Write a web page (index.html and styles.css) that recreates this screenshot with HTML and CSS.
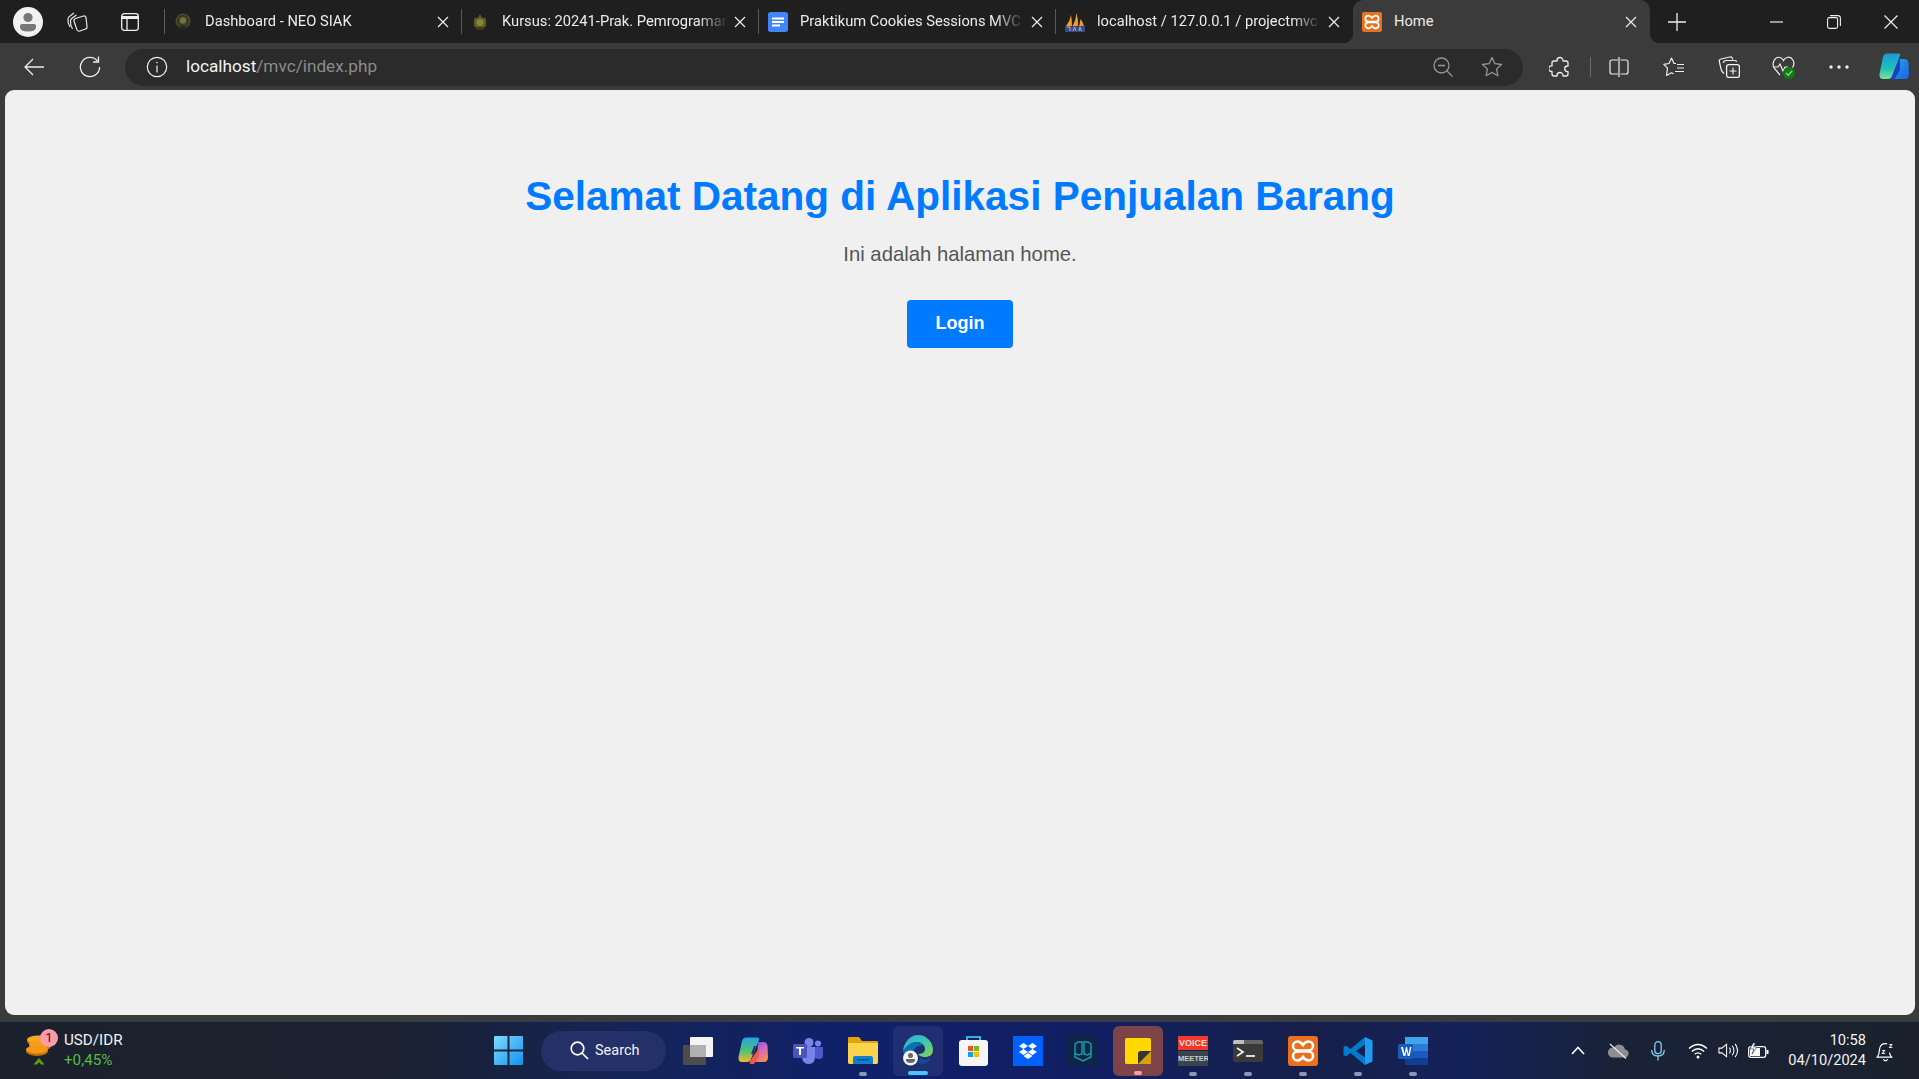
FILE: index.html
```html
<!DOCTYPE html>
<html lang="id">
<head>
<meta charset="utf-8">
<title>Home</title>
<link rel="stylesheet" href="styles.css">
</head>
<body>
<div class="screen">
  <header class="tabstrip">
    <div class="strip-btn b1"><svg width="30" height="30" viewBox="0 0 30 30"><circle cx="15" cy="15" r="15" fill="#f2f2f2"/><circle cx="15" cy="10.5" r="4.6" fill="#777"/><path d="M7 18.5q0-1.500 2-1.500h12q2 0 2 1.500v1.500q0 4.500-8 4.500t-8-4.500z" fill="#777"/></svg></div>
    <div class="strip-btn b2"><svg width="22" height="22" viewBox="0 0 22 22" fill="none" stroke="#e8e8e8" stroke-width="1.200"><path d="M4 16Q1.500 12 2 8q.3-2 2-3l4-3M6.500 18Q4 14 4.500 9.500q.3-1.500 2-2.800l4-2.700"/><path d="M9.500 7.500l8-2.500q2-.3 2.500 1.500l1 9q.2 2-1.500 2.500l-5.500 2q-2 .5-3-1L8 10q-.5-1.800 1.500-2.500z"/></svg></div>
    <div class="strip-btn b3"><svg width="18" height="18" viewBox="0 0 18 18" fill="none" stroke="#f0f0f0" stroke-width="1.300"><rect x=".7" y=".7" width="16.600" height="16.600" rx="2.500"/><path d="M.7 4.500h16.600" stroke-width="3"/><path d="M6 5v12"/></svg></div>
    <div class="strip-sep"></div>

    <div class="tab">
      <svg class="fav" viewBox="0 0 18 18"><circle cx="9" cy="8" r="7" fill="#3a3a26" stroke="#55553a"/><circle cx="9" cy="7.500" r="3.200" fill="#77713a"/><path d="M5 13h8l-4 3z" fill="#222"/></svg>
      <span class="tab-title">Dashboard - NEO SIAK</span>
      <svg class="tab-x" viewBox="0 0 12 12"><path d="M1 1l10 10M11 1L1 11"/></svg>
      <span class="tab-sep"></span>
    </div>
    <div class="tab">
      <svg class="fav" viewBox="0 0 18 18"><path d="M9 1l2 3.500 4 1v7l-2.500 3.500h-7L3 12.500v-7l4-1z" fill="#5f5a28"/><circle cx="9" cy="9.500" r="3.600" fill="#8c8438"/><path d="M4 14h10l-2 3H6z" fill="#3c3a1e"/></svg>
      <span class="tab-title">Kursus: 20241-Prak. Pemrogramar</span>
      <svg class="tab-x" viewBox="0 0 12 12"><path d="M1 1l10 10M11 1L1 11"/></svg>
      <span class="tab-sep"></span>
    </div>
    <div class="tab">
      <svg class="fav docs" viewBox="0 0 20 20"><rect width="20" height="20" rx="2.500" fill="#4285f4"/><path d="M4 5.500h12v2H4zM4 9h12v2H4zM4 12.500h8v2H4z" fill="#fff"/></svg>
      <span class="tab-title">Praktikum Cookies Sessions MVC</span>
      <svg class="tab-x" viewBox="0 0 12 12"><path d="M1 1l10 10M11 1L1 11"/></svg>
      <span class="tab-sep"></span>
    </div>
    <div class="tab">
      <svg class="fav docs" viewBox="0 0 20 20"><path d="M1 14Q5 9 6 3q1 5 1 11zM7.500 14Q11 8 11.500 1q2 7 1.500 13zM14 14q1-3 1.500-7 2.500 3 3.500 7z" fill="#f29b26"/><rect y="14" width="20" height="6" fill="#3d4a80"/><path d="M2 15h3v4M8 19l1.500-4 1.500 4M14 19l1-4 1.500 4" fill="none" stroke="#a5aed6" stroke-width="1"/></svg>
      <span class="tab-title">localhost / 127.0.0.1 / projectmvc</span>
      <svg class="tab-x" viewBox="0 0 12 12"><path d="M1 1l10 10M11 1L1 11"/></svg>
    </div>
    <div class="tab tab-active">
      <svg class="fav docs" viewBox="0 0 30 30"><rect width="30" height="30" rx="3" fill="#e8701f"/><path d="M15 9C13 6 11 5.500 9.500 5.500a4.500 4.500 0 0 0 0 9h11a4.500 4.500 0 0 0 0-9C19 5.500 17 6 15 9zM15 21C13 24 11 24.500 9.500 24.500a4.500 4.500 0 0 1 0-9h11a4.500 4.500 0 0 1 0 9C19 24.500 17 24 15 21z" fill="none" stroke="#fff" stroke-width="2.600"/></svg>
      <span class="tab-title">Home</span>
      <svg class="tab-x" viewBox="0 0 12 12"><path d="M1 1l10 10M11 1L1 11"/></svg>
    </div>
    <div class="newtab"><svg width="18" height="18" viewBox="0 0 18 18"><path d="M9 0v18M0 9h18" stroke="#eee" stroke-width="1.300"/></svg></div>
    <div class="winctl">
      <div class="wbtn"><svg width="14" height="14" viewBox="0 0 14 14"><path d="M0 7h13" stroke="#eee" stroke-width="1.200"/></svg></div>
      <div class="wbtn"><svg width="14" height="14" viewBox="0 0 14 14" fill="none" stroke="#eee" stroke-width="1.100"><rect x=".6" y="2.600" width="10" height="10.800" rx="1.800"/><path d="M3 .6h8q2.400 0 2.400 2.400v8"/></svg></div>
      <div class="wbtn"><svg width="14" height="14" viewBox="0 0 14 14"><path d="M.5.5l13 13M13.500.5l-13 13" stroke="#eee" stroke-width="1.200"/></svg></div>
    </div>
  </header>

  <nav class="toolbar">
    <div class="tool"><svg width="21" height="18" viewBox="0 0 21 18" fill="none" stroke="#eee" stroke-width="1.300"><path d="M20 9H1M9 1L1 9l8 8"/></svg></div>
    <div class="tool"><svg width="22" height="22" viewBox="0 0 22 22" fill="none" stroke="#eee" stroke-width="1.300"><path d="M18.500 5A9.600 9.600 0 1 0 20.600 11"/><path d="M19.500 .5v5.500H14"/></svg></div>
    <div class="address">
      <svg width="22" height="22" viewBox="0 0 22 22" fill="none" stroke="#eee" stroke-width="1.200"><circle cx="11" cy="11" r="9.700"/><path d="M11 9.500v7"/><circle cx="11" cy="6.500" r=".8" fill="#eee" stroke="none"/></svg>
      <div class="url"><span class="host">localhost</span><span class="path">/mvc/index.php</span></div>
      <div class="addr-icons">
        <svg width="20" height="20" viewBox="0 0 20 20" fill="none" stroke="#969696" stroke-width="1.300"><circle cx="8.500" cy="8.500" r="7.500"/><path d="M14 14l5.500 5.500M5 8.500h7"/></svg>
        <svg width="22" height="22" viewBox="0 0 22 22" fill="none" stroke="#969696" stroke-width="1.300"><path d="M11 1.500l2.900 6.200 6.600.8-4.900 4.600 1.300 6.700L11 16.500l-5.900 3.300 1.300-6.700L1.500 8.500l6.600-.8z" stroke-linejoin="round"/></svg>
      </div>
    </div>
    <div class="tool-right">
      <div class="tool"><svg width="21" height="22" viewBox="0 0 21 22" fill="none" stroke="#eee" stroke-width="1.300" stroke-linejoin="round"><path d="M8 4.500a3 3 0 0 1 6 0V5h3q2 0 2 2v3h-.5a2.800 2.800 0 0 0 0 5.600h.5V18q0 2-2 2h-3v-.5a3 3 0 0 0-6 0v.5H5q-2 0-2-2v-2.500H2.500a2.800 2.800 0 0 1 0-5.600H3V7q0-2 2-2h3z"/></svg></div>
      <div class="tool-div"></div>
      <div class="tool tool-split"><svg width="20" height="20" viewBox="0 0 20 20" fill="none" stroke="#eee" stroke-width="1.200"><path d="M9 3H3q-2 0-2 2v10q0 2 2 2h6M11.500 3H17q2 0 2 2v10q0 2-2 2h-5.500M10 0v20"/></svg></div>
      <div class="tool"><svg width="22" height="20" viewBox="0 0 22 20" fill="none" stroke="#eee" stroke-width="1.200" stroke-linejoin="round"><path d="M13 6.500H11L8.500 1 6 6.500l-5.200.8L4.500 11.200l-1 7.300 5-2.800 2 1.100"/><path d="M14 7.500h7M14 11h7M12 14.500h9"/></svg></div>
      <div class="tool"><svg width="22" height="22" viewBox="0 0 22 22" fill="none" stroke="#eee" stroke-width="1.200"><path d="M15 3.500l-1-1.800q-.6-1-2-.7L3 3q-2 .5-1.700 2.300L3 13q.5 2.500 3 4.500"/><path d="M5.500 7q0-2.500 2.500-2.500h9q1.500 0 1.500 1.500"/><rect x="8.600" y="8.600" width="12.800" height="12.800" rx="2.200" stroke="#f2f2f2" stroke-width="1.300"/><path d="M15 11.500v7M11.500 15h7"/></svg></div>
      <div class="tool tool-health"><svg width="24" height="24" viewBox="0 0 24 24"><path d="M8 20L2.500 13.500C-1 8.500 3 1 8 2.500q2.500.8 3.500 3 1-2.200 3.500-3c5-1.500 9 5 5.500 10" fill="none" stroke="#eee" stroke-width="1.200"/><path d="M2 12h4l2-3 3 7 2-4h3" fill="none" stroke="#eee" stroke-width="1.200"/><circle cx="17" cy="18" r="6" fill="#107c10"/><path d="M14 18l2.200 2.300 3.900-4.300" fill="none" stroke="#8fce8f" stroke-width="1.400"/></svg></div>
      <div class="tool"><svg width="20" height="4" viewBox="0 0 20 4" fill="#eee"><circle cx="2" cy="2" r="1.700"/><circle cx="10" cy="2" r="1.700"/><circle cx="18" cy="2" r="1.700"/></svg></div>
      <div class="tool tool-copilot"><svg width="30" height="27" viewBox="0 0 30 27"><defs><linearGradient id="cpA" x1="0" y1="0" x2="0" y2="1"><stop offset="0" stop-color="#1a9ad6"/><stop offset=".6" stop-color="#20c2b8"/><stop offset="1" stop-color="#7fe0a0"/></linearGradient><linearGradient id="cpB" x1="0" y1="0" x2="1" y2="1"><stop offset="0" stop-color="#27a9f0"/><stop offset="1" stop-color="#1a62e0"/></linearGradient></defs><path d="M20 6h5q4 0 4.500 4l.5 11q0 5-4 5H12l4-4z" fill="url(#cpB)"/><path d="M8 .5h11q3 0 2 2.500l-8 20q-1 3-4 3H4q-4 0-3.500-5L4 4q1-3.500 4-3.500z" fill="url(#cpA)"/><path d="M21 3v14l-4 7q-1.500 2.500-4 2.500h-3q2 0 3-2.500z" fill="#1542c8"/></svg></div>
    </div>
  </nav>

  <main class="viewport">
    <h1 class="title">Selamat Datang di Aplikasi Penjualan Barang</h1>
    <p class="lead">Ini adalah halaman home.</p>
    <a class="login" href="#">Login</a>
  </main>

  <footer class="taskbar">
    <div class="widget">
      <div class="coin">
        <svg width="32" height="40" viewBox="0 0 32 40"><ellipse cx="18" cy="10" rx="11" ry="5" fill="#d97c08"/><ellipse cx="18" cy="8.500" rx="11" ry="4" fill="#f6a72a"/><ellipse cx="20" cy="15" rx="11" ry="5" fill="#d87a08"/><ellipse cx="20" cy="13.500" rx="11" ry="4" fill="#f59d1a"/><ellipse cx="17" cy="20" rx="11" ry="5" fill="#c96e06"/><ellipse cx="17" cy="18.500" rx="11" ry="4" fill="#f39a15"/><path d="M13.500 33.500L19 27l5.500 6.500h-3.500L19 31.300l-2 2.200z" fill="#5e9e12"/></svg>
        <span class="badge">1</span>
      </div>
      <div class="quote"><span class="pair">USD/IDR</span><span class="chg">+0,45%</span></div>
    </div>
    <div class="winbtn"><svg width="29" height="29" viewBox="0 0 29 29"><defs><linearGradient id="win" x1="0" y1="0" x2="1" y2="1"><stop offset="0" stop-color="#7fdcfc"/><stop offset="1" stop-color="#0f92f2"/></linearGradient></defs><path d="M1 0h12.500v13.500H0V1q0-1 1-1zM15.500 0H28q1 0 1 1v12.500H15.500zM0 15.500h13.500V29H1q-1 0-1-1zM15.500 15.500H29V28q0 1-1 1H15.500z" fill="url(#win)"/></svg></div>
    <div class="search"><svg width="19" height="19" viewBox="0 0 19 19" fill="none" stroke="#fff" stroke-width="1.700"><circle cx="7.500" cy="7.500" r="6.300"/><path d="M12 12l6 6"/></svg><span>Search</span></div>
    <div class="apps">
      <div class="app"><svg width="30" height="28" viewBox="0 0 30 28"><rect y="8" width="23" height="20" rx="1" fill="#4c4c4c"/><rect x="7" width="23" height="20" rx="1" fill="#f4f4f4"/><rect x="7" y="8" width="16" height="12" fill="#b0b0b0"/></svg></div>
      <div class="app"><svg width="30" height="28" viewBox="0 0 30 28"><defs><linearGradient id="cA" x1=".3" y1="0" x2=".3" y2="1"><stop offset="0" stop-color="#2aa0e8"/><stop offset=".5" stop-color="#46c27a"/><stop offset="1" stop-color="#f5b830"/></linearGradient><linearGradient id="cB" x1="0" y1="0" x2=".6" y2="1"><stop offset="0" stop-color="#5a5ce0"/><stop offset=".55" stop-color="#d869c6"/><stop offset="1" stop-color="#f58a55"/></linearGradient></defs><path d="M20 5h5q4 0 4.500 4l.5 11q0 5-4 5H16l3-3z" fill="url(#cB)"/><path d="M8 .5h11q3 0 2 2.500l-8 19q-1 3-4 3H4q-4 0-3.500-5L4 4q1-3.500 4-3.500z" fill="url(#cA)"/><path d="M21 11v8l-5 8h-3q-2 0-1-3 1-1 2-3z" fill="#ee5a44"/><path d="M17 9l-3 8" stroke="#232a78" stroke-width="2"/></svg></div>
      <div class="app"><svg width="30" height="26" viewBox="0 0 30 26"><circle cx="25" cy="5.500" r="3" fill="#7b83eb"/><circle cx="16" cy="4.500" r="4.500" fill="#7b83eb"/><path d="M21 9h8q1 0 1 1v7q0 4-4 4-3 0-5-2z" fill="#5059c9"/><path d="M9 9h13v10q0 7-6 7t-7-6z" fill="#7b83eb"/><rect y="6" width="14" height="14" rx="1.500" fill="#4b53bc"/><path d="M3 9h8v1.500H8V17H6v-6.500H3z" fill="#fff"/></svg></div>
      <div class="app app-dot"><svg width="30" height="27" viewBox="0 0 30 27"><path d="M0 1q0-1 1-1h10l3 4h15q1 0 1 1v20q0 2-2 2H2q-2 0-2-2z" fill="#e3a30c"/><path d="M0 6h30v19q0 2-2 2H2q-2 0-2-2z" fill="#fcd34d"/><path d="M5 27v-6q0-2 2-2h16q2 0 2 2v6z" fill="#0f80d0"/><path d="M9 22h12v1.500H9z" fill="#0a4d8a"/></svg></div>
      <div class="app app-edge"><svg width="30" height="32" viewBox="0 0 30 32"><defs><linearGradient id="eA" x1="0" y1="0" x2="1" y2="1"><stop offset="0" stop-color="#2fa8e0"/><stop offset=".5" stop-color="#3cc8b0"/><stop offset="1" stop-color="#8ad44c"/></linearGradient></defs><path d="M15 0a15 15 0 0 1 15 15c0 5-4 7-8 7-3 0-6-1-7-3 3 0 7-1 7-5 0-4-4-7-8-7-6 0-11 5-14 9C1 7 7 0 15 0z" fill="url(#eA)"/><path d="M0 16c3-5 8-9 14-9 3 0 5 2 6 4-6-2-10 3-10 9 0 3 2 6 5 8C7 28 1 24 0 16z" fill="#0b6fb8"/><path d="M15 28c5 2 11 0 13-5-3 2-8 2-11 0-1 2-1 4-2 5z" fill="#0c4f94"/><circle cx="7.500" cy="23" r="7.500" fill="#f3f3f3"/><circle cx="7.500" cy="20.500" r="2.500" fill="#666"/><path d="M3 24h9v1.500q-1 2.500-4.500 2.500T3 25.500z" fill="#666"/></svg></div>
      <div class="app"><svg width="29" height="31" viewBox="0 0 29 31"><path d="M8 7V2h13v5" fill="none" stroke="#2bb4d8" stroke-width="2"/><rect y="5" width="29" height="26" rx="3" fill="#f6f6f6"/><rect x="9" y="11" width="5" height="5" fill="#f25022"/><rect x="15" y="11" width="5" height="5" fill="#7fba00"/><rect x="9" y="17" width="5" height="5" fill="#00a4ef"/><rect x="15" y="17" width="5" height="5" fill="#ffb900"/></svg></div>
      <div class="app"><svg width="30" height="30" viewBox="0 0 30 30"><rect width="30" height="30" fill="#0061fe"/><path d="M10.500 7l4.500 3-4.500 3L6 10zM19.500 7l4.500 3-4.500 3L15 10zM10.500 13l4.500 3-4.500 3L6 16zM19.500 13l4.500 3-4.500 3L15 16zM10.500 20l4.500-3 4.500 3-4.500 3z" fill="#fff"/></svg></div>
      <div class="app"><svg width="30" height="30" viewBox="0 0 30 30"><rect width="30" height="30" fill="#0d2547"/><path d="M7 17V8l3-2h4v12l-3.500 1zM23 17V8l-3-2h-4v12l3.500 1zM7 17v4l8 4 8-4v-4" fill="none" stroke="#16a3ac" stroke-width="1.400"/></svg></div>
      <div class="app app-sticky"><svg width="26" height="26" viewBox="0 0 26 26"><rect width="26" height="26" rx="1.500" fill="#ffd800"/><path d="M13 26V16q0-3 3-3h10v11q0 2-2 2z" fill="#d6a00c"/><path d="M13 26V16q0-3 3-3h10z" fill="#333"/></svg></div>
      <div class="app app-dot"><div class="vm"><span class="vm-top">VOICE</span><span class="vm-bot">MEETER</span></div></div>
      <div class="app app-dot"><svg width="30" height="22" viewBox="0 0 30 22"><rect width="30" height="22" rx="2" fill="#3a3a3a"/><path d="M0 2q0-2 2-2h9v4H0z" fill="#bfbfbf"/><path d="M11 0h17q2 0 2 2v2H11z" fill="#666"/><path d="M4 8l6 4-6 4" fill="none" stroke="#eee" stroke-width="1.800"/><path d="M13 16h9" stroke="#eee" stroke-width="1.800"/></svg></div>
      <div class="app app-dot"><svg width="30" height="30" viewBox="0 0 30 30"><rect width="30" height="30" rx="3" fill="#e8701f"/><path d="M15 9C13 6 11 5.500 9.500 5.500a4.500 4.500 0 0 0 0 9h11a4.500 4.500 0 0 0 0-9C19 5.500 17 6 15 9zM15 21C13 24 11 24.500 9.500 24.500a4.500 4.500 0 0 1 0-9h11a4.500 4.500 0 0 1 0 9C19 24.500 17 24 15 21z" fill="none" stroke="#fff" stroke-width="2.600"/></svg></div>
      <div class="app app-dot"><svg width="30" height="30" viewBox="0 0 30 30"><path d="M22 1L7.500 13 3 9.500.5 11v8L3 20.500 7.500 17 22 29v-7.500L13 15l9-6.500z" fill="#007acc"/><path d="M22 1l7.500 3.500v21L22 29z" fill="#1f9cf0"/></svg></div>
      <div class="app app-dot"><svg width="30" height="30" viewBox="0 0 30 30"><rect x="7" y="1" width="23" height="28" rx="2" fill="#2b7cd3"/><rect x="7" y="1" width="23" height="7" fill="#41a5ee"/><rect x="7" y="15" width="23" height="7" fill="#185abd"/><path d="M7 22h23v5q0 2-2 2H9q-2 0-2-2z" fill="#103f91"/><rect y="8" width="15" height="15" rx="1.500" fill="#185abd"/><path d="M3 11h2l1.500 7L8 11h1l1.500 7L12 11h1.500l-2 9h-1.800L8.500 14.500 7.300 20H5.500z" fill="#fff"/></svg></div>
    </div>
    <div class="tray">
      <div class="tray-ic"><svg width="14" height="9" viewBox="0 0 14 9" fill="none" stroke="#fff" stroke-width="1.600"><path d="M1 8l6-6.500L13 8"/></svg></div>
      <div class="tray-ic"><svg width="22" height="16" viewBox="0 0 22 16"><path d="M5 14.500H17a4 4 0 0 0 1-8A6 6 0 0 0 7 4.500a5 5 0 0 0-2 10z" fill="#8f8f93"/><path d="M3 1l16 14.500" stroke="#eee" stroke-width="1.100"/></svg></div>
      <div class="tray-ic"><svg width="14" height="20" viewBox="0 0 14 20" fill="none" stroke="#7fd0f0" stroke-width="1.300"><rect x="3.800" y=".7" width="6.400" height="12" rx="3.200"/><path d="M.7 9q0 6 6.300 6t6.300-6M7 15v4.500"/></svg></div>
      <div class="tray-ic"><svg width="20" height="16" viewBox="0 0 20 16" fill="none" stroke="#fff" stroke-width="1.300"><path d="M1 5.500q9-8 18 0M3.800 8.500q6.200-5.500 12.400 0M6.700 11.200q3.300-2.800 6.600 0"/><circle cx="10" cy="14" r="1.500" fill="#fff" stroke="none"/></svg></div>
      <div class="tray-ic tray-vol"><svg width="21" height="17" viewBox="0 0 21 17" fill="none" stroke="#fff" stroke-width="1.100"><path d="M1 6h3l5-4v13l-5-4H1z"/><path d="M12 5.500q2 3 0 6M15 3.500q3.500 5 0 10M18 1.500q5 7 0 14"/></svg></div>
      <div class="tray-ic"><svg width="21" height="16" viewBox="0 0 21 16"><rect x=".7" y="3.700" width="17" height="10.600" rx="2" fill="none" stroke="#fff" stroke-width="1.200"/><rect x="2" y="5" width="10" height="8" fill="#fff"/><rect x="18.500" y="7" width="2" height="4" fill="#fff"/><path d="M5 0l-3 6h4l-2 5 5-7H5.500L7.500 0z" fill="#fff" stroke="#1a212d" stroke-width=".6"/></svg></div>
      <div class="clock"><span>10:58</span><span>04/10/2024</span></div>
      <div class="tray-bell"><svg width="20" height="22" viewBox="0 0 18 20" fill="none" stroke="#fff" stroke-width="1.100"><path d="M10 3.500Q3.500 2.500 3 9q0 4-2 6.500h13q-1.500-1.500-1.800-4"/><path d="M6.500 17.500q1 1.500 2 1.500t2-1.500"/><text x="11.500" y="7" class="zz">z</text><text x="5" y="13" class="zz">z</text></svg></div>
    </div>
  </footer>
</div>
</body>
</html>
```
FILE: styles.css
```css
* { box-sizing: border-box; }
html, body { margin: 0; padding: 0; height: 100%; overflow: hidden; }
body { background: #3b3b3b; font-family: Roboto, "Open Sans", sans-serif; color: #fff; }
.screen { display: flex; flex-direction: column; height: 100vh; }

/* tab strip */
.tabstrip { display: flex; align-items: stretch; height: 43px; background: #1f1f1f; padding-left: 2px; flex: none; }
.strip-btn { display: flex; align-items: center; justify-content: center; }
.b1 { width: 52px; }
.b2 { width: 46px; }
.b3 { width: 59px; }
.strip-sep { width: 1px; height: 25px; align-self: center; background: #5a5a5a; margin-left: 5px; }
.tab { display: flex; align-items: center; width: 297px; padding-left: 9px; position: relative; flex: none; }
.fav { width: 18px; height: 18px; flex: none; }
.fav.docs { width: 20px; height: 20px; }
.fav.docs + .tab-title { margin-left: 12px; }
.tab-title { flex: 1; min-width: 0; margin: 0 4px 2px 13px; font-size: 14.700px; line-height: 20px; white-space: nowrap; overflow: hidden; color: #ececec; -webkit-mask-image: linear-gradient(90deg, #000 calc(100% - 30px), transparent); mask-image: linear-gradient(90deg, #000 calc(100% - 30px), transparent); }
.tab-active .tab-title { -webkit-mask-image: none; mask-image: none; }
.tab:first-of-type .tab-title { -webkit-mask-image: none; mask-image: none; }
.tab-x { width: 12px; height: 12px; margin: 0 12px 0 2px; flex: none; fill: none; stroke: #eee; stroke-width: 1.200; }
.tab-sep { width: 1px; height: 25px; background: #5a5a5a; flex: none; }
.tab:not(:has(.tab-sep)) .tab-x { margin-right: 13px; }
.tab-active { background: #3b3b3b; border-radius: 10px 10px 0 0; }
.tab-active::before, .tab-active::after { content: ""; position: absolute; bottom: 0; width: 10px; height: 10px; }
.tab-active::before { left: -10px; background: radial-gradient(circle at 0 0, transparent 10px, #3b3b3b 10.500px); }
.tab-active::after { right: -10px; background: radial-gradient(circle at 100% 0, transparent 10px, #3b3b3b 10.500px); }
.newtab { display: flex; align-items: center; margin-left: 18px; }
.winctl { display: flex; margin-left: auto; align-items: center; padding-right: 0; }
.wbtn { display: flex; justify-content: center; align-items: center; width: 57px; }

/* toolbar */
.toolbar { display: flex; align-items: center; height: 47px; padding: 0 0 0 7px; flex: none; background: #3b3b3b; }
.tool { display: flex; align-items: center; justify-content: center; width: 55px; height: 37px; flex: none; }
.address { display: flex; align-items: center; width: 1398px; height: 37px; margin: 1px 0 0 8px; padding: 0 20px 0 21px; border-radius: 19px; background: #2b2b2b; flex: none; }
.url { flex: 1; margin: 0 0 2px 18px; font-size: 17.200px; line-height: 20px; }
.host { color: #f5f5f5; }
.path { color: #8c8c8c; }
.addr-icons { display: flex; align-items: center; gap: 28.500px; }
.tool-right { display: flex; align-items: center; margin-left: 8.500px; flex: none; }
.tool-div { width: 1px; height: 20px; background: #6a6a6a; margin: 0 1px 0 3px; flex: none; }
.tool-copilot { width: 51.500px; justify-content: flex-end; padding-right: 9px; }

/* page */
.viewport { flex: 1; min-height: 0; margin: 0 4px 6px 5px; background: #f0f0f0; border-radius: 9px; padding-top: 83px; display: flex; flex-direction: column; align-items: center; font-family: "Liberation Sans", Arial, sans-serif; }
.title { margin: 0; font-size: 40.500px; line-height: 46px; font-weight: 700; color: #007bff; }
.lead { margin: 24px 0 0; font-size: 20.300px; line-height: 23px; color: #555; }
.login { display: flex; align-items: center; justify-content: center; width: 106px; height: 48px; margin-top: 34px; padding-bottom: 1px; border-radius: 4px; background: #007bff; color: #fff; font-size: 18px; font-weight: 700; text-decoration: none; }

/* taskbar */
.taskbar { display: flex; align-items: center; height: 58px; flex: none; border-top: 1px solid #2f3a55; background: linear-gradient(90deg, #1b212c 0, #1b212e 20%, #142458 33%, #10206a 45%, #111f60 58%, #171f48 68%, #14225a 76%, #1a2238 84%, #1a212d 100%); }
.widget { display: flex; align-items: center; width: 481px; padding-left: 20px; flex: none; }
.coin { position: relative; width: 32px; height: 40px; margin-right: 12px; flex: none; }
.badge { position: absolute; left: 20px; top: -2px; width: 18px; height: 18px; border-radius: 50%; background: #ff9ba9; color: #222; font-size: 13px; line-height: 18px; text-align: center; }
.quote { display: flex; flex-direction: column; font-size: 15.200px; line-height: 20px; margin-top: -1px; }
.pair { color: #f2f2f2; }
.chg { color: #58b947; }
.winbtn { display: flex; align-items: center; justify-content: center; width: 55px; flex: none; }
.search { display: flex; align-items: center; gap: 6px; width: 125px; height: 40px; margin: 0 4.500px 0 5px; padding-left: 29px; border-radius: 20px; background: #243068; font-size: 14.500px; color: #f4f4f4; flex: none; }
.apps { display: flex; flex: none; }
.app { position: relative; display: flex; align-items: center; justify-content: center; width: 55px; height: 50px; flex: none; }
.app-dot::after, .app-edge::after, .app-sticky::after { content: ""; position: absolute; left: 50%; bottom: 0; width: 8px; height: 4px; margin-left: -4px; border-radius: 2px; background: #8f96b4; }
.app-edge::before, .app-sticky::before { content: ""; position: absolute; left: 2.500px; top: 0; width: 50px; height: 50px; border-radius: 6px; }
.app-edge::before { background: rgba(255, 255, 255, .07); }
.app-sticky::before { background: #7c4448; }
.app svg, .vm { position: relative; z-index: 1; }
.app-edge::after { width: 20px; margin-left: -10px; background: #4cc2ff; bottom: 1px; }
.app-sticky::after { background: #ff9ba9; width: 8px; bottom: 1px; }
.vm { display: flex; flex-direction: column; width: 30px; height: 30px; font: 700 9px/1 "Liberation Sans", sans-serif; text-align: center; overflow: hidden; }
.vm-top { height: 14px; background: #f0382c; color: #f6dcd0; line-height: 14px; }
.vm-bot { height: 15px; margin-top: 1px; background: #3a444c; color: #c8ced0; line-height: 15px; font-size: 7.500px; }
.tray { display: flex; align-items: center; margin-left: auto; padding-right: 13px; flex: none; }
.tray-ic { display: flex; align-items: center; justify-content: center; width: 40px; flex: none; }
.tray-vol { width: 20px; }
.clock { display: flex; flex-direction: column; align-items: flex-end; width: 88px; margin-bottom: 2px; font-size: 14.600px; line-height: 20px; color: #f4f4f4; flex: none; }
.tray-bell { display: flex; align-items: center; justify-content: center; width: 40px; flex: none; }
.zz { font: 700 7px "Liberation Sans", sans-serif; fill: #fff; stroke: none; }
```
